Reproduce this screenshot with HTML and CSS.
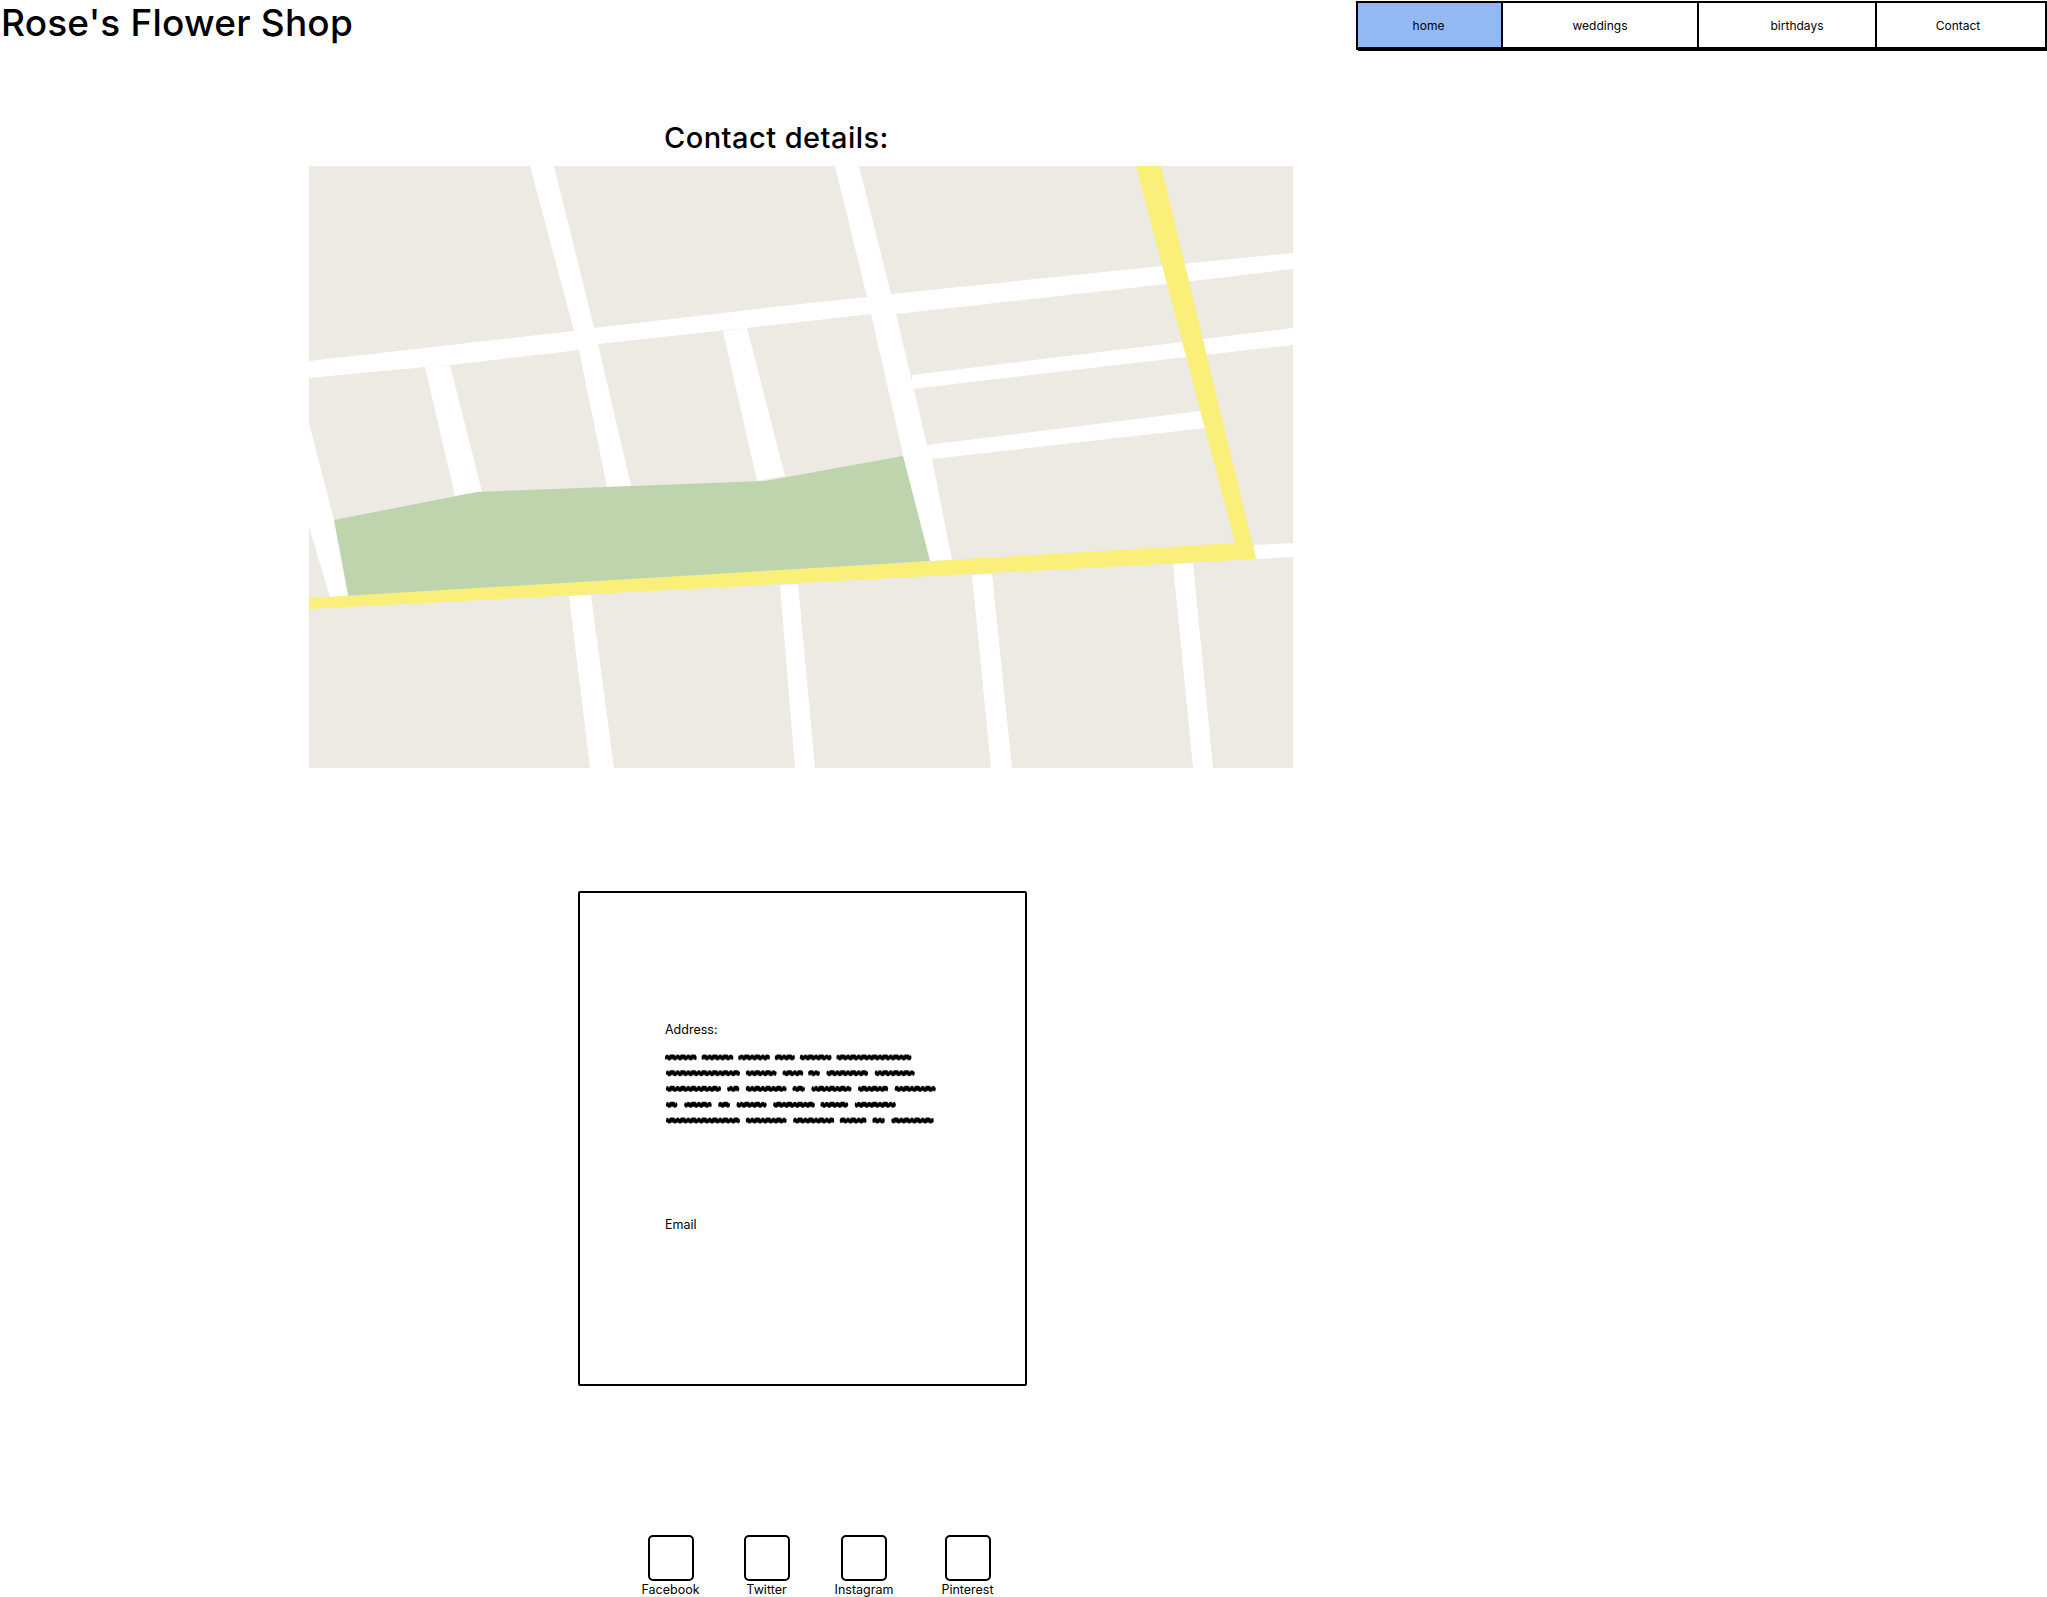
FILE: index.html
```html
<!DOCTYPE html>
<html lang="en">
<head>
<meta charset="utf-8">
<title>Rose's Flower Shop</title>
<link rel="stylesheet" href="styles.css">
</head>
<body>
<header class="top">
  <h1 class="brand">Rose's Flower Shop</h1>
  <nav class="nav">
    <a class="nav-item nav-home">home</a>
    <a class="nav-item nav-weddings">weddings</a>
    <a class="nav-item nav-birthdays">birthdays</a>
    <a class="nav-item nav-contact">Contact</a>
  </nav>
</header>
<main class="main">
  <h2 class="title">Contact details:</h2>
  <svg class="map" viewBox="309 166 984 602" role="img" aria-label="Map">
    <rect class="land" x="309" y="166" width="984" height="602"/>
    <g class="road">
      <polygon points="309,361 574,331 594,328 800,304 867,297 891,294 1162,266 1293,253 1293,269 1167,284 896,314 871,314 800,322 598,344 579,350 450,365 425,367 309,378"/>
      <polygon points="530,166 554,166 594,328 598,344 631,486 607,487 579,350 574,331"/>
      <polygon points="425,367 450,365 482,492 455,496"/>
      <polygon points="723,331 747,328 785,476 757,481"/>
      <polygon points="835,166 859,166 891,294 896,314 927,445 932,459 952,560 930,561 903,456 902,450 871,314 867,297"/>
      <polygon points="309,423 334,520 349,596 330,597 309,527"/>
      <polygon points="912,375 1182,342 1203,339 1293,328 1293,345 1186,357 912,389"/>
      <polygon points="927,445 1200,411 1205,428 932,459"/>
      <polygon points="1254,545 1293,543 1293,557 1256,559"/>
      <polygon points="569,596 591,595 614,768 590,768"/>
      <polygon points="780,585 798,584 815,768 795,768"/>
      <polygon points="972,575 992,574 1012,768 991,768"/>
      <polygon points="1173,564 1193,563 1213,768 1193,768"/>
    </g>
    <polygon class="park" points="334,520 477,492 765,481 903,456 930,561 349,600"/>
    <polygon class="highway" points="1136,166 1161,166 1256,559 309,609 309,598 1235,543"/>
  </svg>
  <section class="card">
    <div class="label">Address:</div>
    <svg class="scribble" viewBox="75 130 820 215" aria-hidden="true">
      <defs>
        <pattern id="squig" patternUnits="userSpaceOnUse" x="0" y="119.25" width="32" height="47.5">
          <path d="M-4 28 L3 17 L9 28 L17 19 L24 28 L30 17 L36 28" fill="none" stroke="#000" stroke-width="10"/>
        </pattern>
      </defs>
      <g class="words">
        <rect x="75" y="134" width="95" height="18" rx="7"/><rect x="185" y="134" width="95" height="18" rx="7"/><rect x="295" y="134" width="95" height="18" rx="7"/><rect x="405" y="134" width="60" height="18" rx="7"/><rect x="480" y="134" width="95" height="18" rx="7"/><rect x="590" y="134" width="225" height="18" rx="7"/>
        <rect x="78" y="181" width="222" height="18" rx="7"/><rect x="318" y="181" width="92" height="18" rx="7"/><rect x="428" y="181" width="62" height="18" rx="7"/><rect x="505" y="181" width="35" height="18" rx="7"/><rect x="560" y="181" width="125" height="18" rx="7"/><rect x="705" y="181" width="120" height="18" rx="7"/>
        <rect x="78" y="228" width="165" height="18" rx="7"/><rect x="262" y="228" width="36" height="18" rx="7"/><rect x="318" y="228" width="122" height="18" rx="7"/><rect x="458" y="228" width="37" height="18" rx="7"/><rect x="515" y="228" width="120" height="18" rx="7"/><rect x="655" y="228" width="90" height="18" rx="7"/><rect x="765" y="228" width="123" height="18" rx="7"/>
        <rect x="78" y="276" width="34" height="18" rx="7"/><rect x="133" y="276" width="82" height="18" rx="7"/><rect x="235" y="276" width="35" height="18" rx="7"/><rect x="290" y="276" width="90" height="18" rx="7"/><rect x="400" y="276" width="125" height="18" rx="7"/><rect x="542" y="276" width="83" height="18" rx="7"/><rect x="645" y="276" width="123" height="18" rx="7"/>
        <rect x="78" y="323" width="222" height="18" rx="7"/><rect x="318" y="323" width="122" height="18" rx="7"/><rect x="460" y="323" width="123" height="18" rx="7"/><rect x="600" y="323" width="80" height="18" rx="7"/><rect x="698" y="323" width="37" height="18" rx="7"/><rect x="755" y="323" width="127" height="18" rx="7"/>
      </g>
    </svg>
    <div class="label label-email">Email</div>
  </section>
  <ul class="social">
    <li class="social-item"><span class="social-box"></span><span class="social-name">Facebook</span></li>
    <li class="social-item"><span class="social-box"></span><span class="social-name">Twitter</span></li>
    <li class="social-item"><span class="social-box"></span><span class="social-name">Instagram</span></li>
    <li class="social-item"><span class="social-box"></span><span class="social-name">Pinterest</span></li>
  </ul>
</main>
</body>
</html>
```
FILE: styles.css
```css
* { box-sizing: border-box; }
html, body { margin: 0; padding: 0; background: #fff; }
body {
  height: 1597px;
  overflow: hidden;
  color: #000;
  font-family: "Inter", "Liberation Sans", sans-serif;
}
.top {
  display: flex;
  justify-content: space-between;
  align-items: flex-start;
  height: 166px;
}
.brand {
  margin: 0;
  padding-left: 1px;
  font-size: 37px;
  line-height: 46px;
  font-weight: 500;
  letter-spacing: 0.2px;
}
.nav {
  display: flex;
  width: 691px;
  height: 49px;
  margin-top: 1px;
  border: 2px solid #000;
  border-bottom-width: 3px;
  border-right: 0;
  font-size: 12px;
  box-shadow: 2px 1px 0 0 #000;
}
.nav-item {
  display: flex;
  align-items: center;
  justify-content: center;
  border-right: 2px solid #000;
}
.nav-home { width: 145px; padding-right: 2px; background: #93b9f2; }
.nav-weddings { width: 196px; }
.nav-birthdays { width: 178px; padding-left: 20px; }
.nav-contact { flex: 1; padding-right: 6px; }
.main {
  position: relative;
  width: 984px;
  margin-left: 309px;
  margin-top: -45px;
}
.title {
  margin: 0 0 11px;
  padding-left: 355px;
  font-size: 29px;
  line-height: 34px;
  font-weight: 500;
  letter-spacing: 0.45px;
}
.map {
  display: block;
  width: 984px;
  height: 602px;
}
.land { fill: #ecEAE3; }
.road { fill: #fff; }
.park { fill: #bdd4ac; }
.highway { fill: #faef78; }
.card {
  width: 449px;
  height: 495px;
  margin: 123px 0 0 269px;
  padding: 129px 0 0 85px;
  border: 2px solid #000;
  border-radius: 2px;
}
.label {
  font-size: 12.5px;
  line-height: 16px;
}
.scribble {
  display: block;
  width: 273px;
  height: 72px;
  margin-top: 15px;
}
.words { fill: url(#squig); }
.label-email { margin-top: 92px; }
.social {
  display: grid;
  grid-template-columns: 57px 39px 60px 51px;
  gap: 48px;
  justify-items: center;
  margin: 149px 0 0 333px;
  padding: 0;
  list-style: none;
}
.social-item {
  display: flex;
  flex-direction: column;
  align-items: center;
  gap: 1px;
}
.social-box {
  width: 46px;
  height: 46px;
  border: 2px solid #000;
  border-radius: 5px;
}
.social-name {
  font-size: 12.5px;
  line-height: 15px;
}
```
